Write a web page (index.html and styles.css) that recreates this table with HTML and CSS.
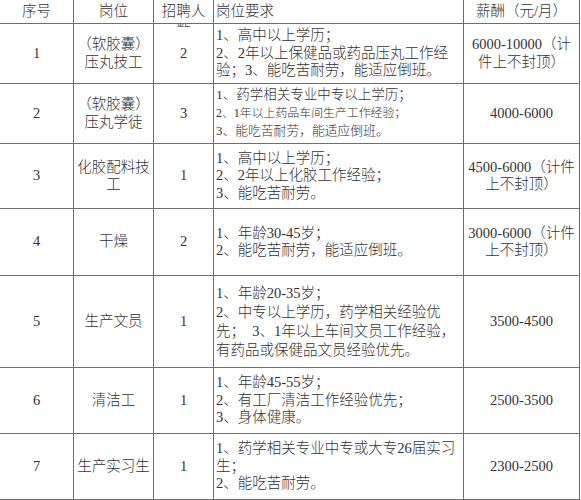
FILE: index.html
```html
<!DOCTYPE html>
<html lang="zh-CN">
<head>
<meta charset="utf-8">
<title>招聘岗位</title>
<link rel="stylesheet" href="styles.css">
</head>
<body>
<div class="sheet">
  <div class="c hd">序号</div>
  <div class="c hd">岗位</div>
  <div class="c hd top"><div class="clip">招聘人<br>数</div></div>
  <div class="c hd req">岗位要求</div>
  <div class="c hd">薪酬（元/月）</div>

  <div class="c">1</div>
  <div class="c"><div>（软胶囊）<br>压丸技工</div></div>
  <div class="c">2</div>
  <div class="c req"><div>1、高中以上学历；<br>2、2年以上保健品或药品压丸工作经<br>验；3、能吃苦耐劳，能适应倒班。</div></div>
  <div class="c"><div>6000-10000（计<br>件上不封顶）</div></div>

  <div class="c">2</div>
  <div class="c"><div>（软胶囊）<br>压丸学徒</div></div>
  <div class="c">3</div>
  <div class="c req small"><div><span class="l1">1、药学相关专业中专以上学历；</span><br><span class="l2">2、1年以上药品车间生产工作经验；</span><br><span class="l3">3、能吃苦耐劳，能适应倒班。</span></div></div>
  <div class="c">4000-6000</div>

  <div class="c">3</div>
  <div class="c"><div>化胶配料技<br>工</div></div>
  <div class="c">1</div>
  <div class="c req"><div>1、高中以上学历；<br>2、2年以上化胶工作经验；<br>3、能吃苦耐劳。</div></div>
  <div class="c"><div>4500-6000（计件<br>上不封顶）</div></div>

  <div class="c">4</div>
  <div class="c">干燥</div>
  <div class="c">2</div>
  <div class="c req"><div>1、年龄30-45岁；<br>2、能吃苦耐劳，能适应倒班。</div></div>
  <div class="c"><div>3000-6000（计件<br>上不封顶）</div></div>

  <div class="c">5</div>
  <div class="c">生产文员</div>
  <div class="c">1</div>
  <div class="c req tall"><div>1、年龄20-35岁；<br>2、中专以上学历，药学相关经验优<br>先；&nbsp; 3、1年以上车间文员工作经验，<br>有药品或保健品文员经验优先。</div></div>
  <div class="c">3500-4500</div>

  <div class="c">6</div>
  <div class="c">清洁工</div>
  <div class="c">1</div>
  <div class="c req"><div>1、年龄45-55岁；<br>2、有工厂清洁工作经验优先；<br>3、身体健康。</div></div>
  <div class="c">2500-3500</div>

  <div class="c">7</div>
  <div class="c">生产实习生</div>
  <div class="c">1</div>
  <div class="c req"><div>1、药学相关专业中专或大专26届实习<br>生；<br>2、能吃苦耐劳。</div></div>
  <div class="c">2300-2500</div>
</div>
</body>
</html>
```
FILE: styles.css
```css
html, body {
  margin: 0;
  padding: 0;
  background: #ffffff;
}

body {
  font-family: "Liberation Serif", "Noto Sans CJK SC", serif;
  font-size: 14.5px;
  line-height: 17.5px;
  color: #333333;
  font-weight: 300;
}

.sheet {
  display: grid;
  grid-template-columns: 74px 80px 60px 250px 116px;
  grid-template-rows: 24px 60px 60px 65px 67px 92px 66px 66px;
  width: 580px;
}

.c {
  box-sizing: border-box;
  border-right: 1px solid #6e6e6e;
  border-bottom: 1px solid #6e6e6e;
  display: flex;
  align-items: center;
  justify-content: center;
  text-align: center;
  white-space: nowrap;
  min-width: 0;
}

.req {
  justify-content: flex-start;
  text-align: left;
  padding-left: 2px;
}

.top {
  align-items: flex-start;
}

.clip {
  box-sizing: border-box;
  height: 27px;
  padding-top: 1px;
  line-height: 20px;
  overflow: hidden;
}

.small .l1 {
  font-size: 13.5px;
}

.small .l2 {
  font-size: 11.9px;
}

.small .l3 {
  font-size: 12.8px;
}

.tall {
  line-height: 19px;
}
```
